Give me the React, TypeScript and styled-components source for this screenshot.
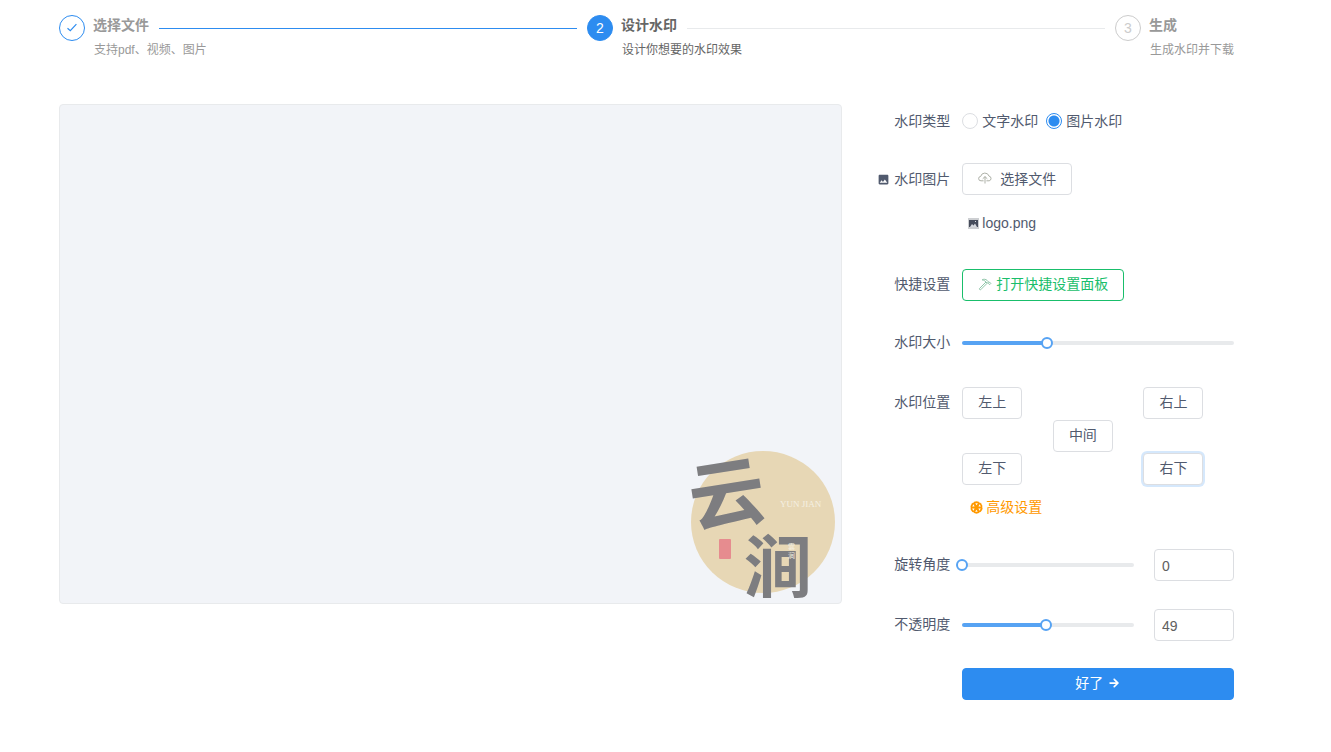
import React, { useState } from "react";
import styled, { createGlobalStyle } from "styled-components";
import { IoMdArrowRoundForward, IoMdImage } from "react-icons/io";

const GlobalStyle = createGlobalStyle`
  *, *::before, *::after { box-sizing: border-box; }
  body {
    margin: 0;
    background: #fff;
    color: #515a6e;
    font-family: "Liberation Sans", "Noto Sans CJK SC", sans-serif;
    font-size: 14px;
    line-height: 20px;
  }
  button, input { font: inherit; }
`;

const Page = styled.main`
  padding: 15px 97px 52px 59px;
`;

/* ---------- steps ---------- */

type StepState = "done" | "active" | "wait";

const Steps = styled.ol`
  display: flex;
  margin: 0 0 45px;
  padding: 0;
  list-style: none;
`;

const StepItem = styled.li`
  display: flex;
  gap: 8px;
  flex: 1;

  &:last-child {
    flex: none;
  }
`;

const StepMark = styled.span<{ $state: StepState }>`
  display: flex;
  align-items: center;
  justify-content: center;
  width: 26px;
  height: 26px;
  border: 1px solid ${(p) => (p.$state === "wait" ? "#ccc" : "#2d8cf0")};
  border-radius: 50%;
  background: ${(p) => (p.$state === "active" ? "#2d8cf0" : "#fff")};
  color: ${(p) =>
    p.$state === "active" ? "#fff" : p.$state === "wait" ? "#ccc" : "#2d8cf0"};
`;

const StepBody = styled.div<{ $state: StepState }>`
  flex: 1;
  color: ${(p) => (p.$state === "active" ? "#666" : "#999")};
`;

const StepHead = styled.div`
  display: flex;
  align-items: flex-start;
  gap: 10px;
  height: 26px;
`;

const StepTitle = styled.strong`
  font-weight: 700;
`;

const StepLine = styled.span<{ $done: boolean }>`
  flex: 1;
  align-self: center;
  height: 1px;
  margin-right: 10px;
  background: ${(p) => (p.$done ? "#2d8cf0" : "#e8eaec")};
`;

const StepText = styled.div`
  padding-left: 1px;
  font-size: 12px;
  line-height: 18px;
`;

/* ---------- workspace ---------- */

const Workspace = styled.div`
  display: grid;
  grid-template-columns: 2fr 1fr;
  align-items: start;
`;

const Preview = styled.section`
  display: flex;
  align-items: flex-end;
  justify-content: flex-end;
  min-height: 500px;
  padding: 3px 5px;
  border: 1px solid #e8eaec;
  border-radius: 4px;
  background: #f2f4f8;
`;

const Form = styled.form`
  display: flex;
  flex-direction: column;
  gap: 24px;
`;

const Row = styled.div<{ $tall?: boolean }>`
  display: grid;
  grid-template-columns: 108px minmax(0, 1fr);
  column-gap: 12px;
  align-items: start;
  min-height: ${(p) => (p.$tall ? 36 : 34)}px;
`;

const RowLabel = styled.label`
  display: flex;
  align-items: center;
  justify-content: flex-end;
  gap: 4px;
  line-height: 34px;
`;

const RadioGroup = styled.div`
  display: flex;
  gap: 8px;
  line-height: 34px;
`;

const RadioLabel = styled.label`
  display: flex;
  align-items: center;
  gap: 4px;
`;

const Radio = styled.input`
  appearance: none;
  width: 16px;
  height: 16px;
  margin: 0;
  border: 1px solid #dcdee2;
  border-radius: 50%;
  background: #fff;

  &:checked {
    border-color: #2d8cf0;
    background: radial-gradient(circle, #2d8cf0 5px, #fff 6px);
  }
`;

const Button = styled.button<{ $tone?: "success" | "primary"; $focus?: boolean }>`
  display: inline-flex;
  align-items: center;
  justify-content: center;
  gap: 4px;
  height: 32px;
  padding: 0 15px 2px;
  border: 1px solid
    ${(p) =>
      p.$tone === "success" ? "#19be6b" : p.$tone === "primary" ? "#2d8cf0" : "#dcdee2"};
  border-radius: 4px;
  background: ${(p) => (p.$tone === "primary" ? "#2d8cf0" : "#fff")};
  color: ${(p) =>
    p.$tone === "success" ? "#19be6b" : p.$tone === "primary" ? "#fff" : "#515a6e"};
  box-shadow: ${(p) => (p.$focus ? "0 0 0 2px rgba(45, 140, 240, 0.2)" : "none")};
  cursor: pointer;
`;

const UploadButton = styled(Button)`
  gap: 8px;
  padding-bottom: 0;
`;

const ButtonField = styled.div`
  display: flex;
  flex-direction: column;
  align-items: flex-start;
  padding-top: 1px;
`;

const QuickField = styled(ButtonField)`
  padding-top: 2px;
`;

const SubmitField = styled(ButtonField)`
  align-items: stretch;
  grid-column: 2;
`;

const FileList = styled.ul`
  margin: 16px 0 8px;
  padding: 0;
  list-style: none;
`;

const FileItem = styled.li`
  display: flex;
  align-items: center;
  gap: 3px;
  padding: 2px 6px;
`;

const SliderField = styled.div<{ $withInput?: boolean }>`
  display: grid;
  grid-template-columns: ${(p) => (p.$withInput ? "1fr 80px" : "1fr")};
  column-gap: 20px;
  align-items: center;
  height: 36px;
`;

const SliderTrack = styled.div`
  display: flex;
  align-items: center;
  height: 4px;
  border-radius: 2px;
`;

const Range = styled.input`
  appearance: none;
  flex: 1;
  height: 12px;
  margin: 0 -6px;
  background: transparent;

  &::-webkit-slider-thumb {
    appearance: none;
    width: 12px;
    height: 12px;
    border: 2px solid #57a3f3;
    border-radius: 50%;
    background: #fff;
  }
`;

const NumberBox = styled.input`
  width: 100%;
  height: 32px;
  padding: 2px 7px 0;
  border: 1px solid #dcdee2;
  border-radius: 4px;
  background: #fff;
  color: #606060;
`;

const PositionGrid = styled.div`
  display: grid;
  grid-template-columns: repeat(3, 1fr);
  justify-items: start;
  row-gap: 1px;
  padding-top: 2px;
`;

const PositionSlot = styled.div<{ $col: number; $row: number }>`
  grid-column: ${(p) => p.$col};
  grid-row: ${(p) => p.$row};
`;

const Advanced = styled.a`
  display: flex;
  align-items: center;
  gap: 3px;
  grid-column: 1 / -1;
  padding: 11px 8px 6px;
  color: #ff9900;
  text-decoration: none;
`;

/* ---------- drawings ---------- */

const CheckIcon = () => (
  <svg width="14" height="14" viewBox="0 0 14 14" fill="none" stroke="currentColor" strokeWidth="1.2" aria-hidden="true">
    <path d="M2.5 7.2 5.3 9.6 11.4 3.2" />
  </svg>
);

const CloudIcon = () => (
  <svg width="14" height="14" viewBox="0 0 14 14" fill="none" stroke="#a5a89e" strokeWidth="0.9" aria-hidden="true">
    <path d="M5.6 8.8H3a2.2 2.2 0 0 1-.3-4.4 4.3 4.3 0 0 1 8.3-.3 2.4 2.4 0 0 1 .2 4.7H8.4" />
    <path d="M7 11.5V4.6M4.7 6.8 7 4.6l2.3 2.2" />
  </svg>
);

const HammerIcon = () => (
  <svg width="14" height="14" viewBox="0 0 14 14" fill="none" stroke="#84bfa0" strokeWidth="0.9" aria-hidden="true">
    <path d="M1.4 11.6 8 5l1.2 1.2-6.6 6.6c-.5.4-1.6-.7-1.2-1.2Z" />
    <path d="M8 5 7 4.1C6 3.2 5 3 4.1 2.9c1.7-1 3.6-.8 5 .5l2 2 .8-.1 1 1-1.3 1.4-1-1 .1-.7-.8-.7L9.2 6.2" />
  </svg>
);

const ThumbIcon = () => (
  <svg width="11" height="11" viewBox="0 0 11 11" aria-hidden="true">
    <path fill="#cdcfd2" d="M0 0h11v11H0z" />
    <path fill="#464c5b" d="M1 2h9v7H1z" />
    <path fill="#d5d8de" d="M2 9l2-3 1.5 1.6L7 5.5 9 9zM7 3h1v1H7z" />
  </svg>
);

const spokes = [0, 60, 120, 180, 240, 300];

const ApertureIcon = () => (
  <svg width="13" height="13" viewBox="-7 -7 14 14" aria-hidden="true">
    <circle r="6.6" fill="currentColor" />
    {spokes.map((deg) => (
      <g key={deg} transform={`rotate(${deg})`} fill="#fff">
        <path d="M-1.3-4.6H1.5L0-2.4Z" />
        <path d="M2.4-6.6 3.8-6 2.8-5.2Z" />
      </g>
    ))}
  </svg>
);

const LogoSvg = styled.svg`
  overflow: visible;
`;

const Logo = () => (
  <LogoSvg width="146" height="153" viewBox="0 0 146 153" role="img" aria-label="云涧 YUN JIAN">
    <ellipse cx="73" cy="75" rx="72" ry="71" fill="#e7d7b5" />
    <rect x="29" y="92" width="12" height="20" rx="1" fill="#e68c8f" />
    <g fill="#7d7d80" fontFamily="'Noto Sans CJK SC', sans-serif" fontWeight="700">
      <text x="-2" y="75" fontSize="76" transform="rotate(-9 36 42)">云</text>
      <text x="54" y="145" fontSize="68">涧</text>
    </g>
    <g fill="#f5f0e2">
      <text x="90" y="60" fontFamily="'Liberation Serif', serif" fontSize="9">YUN JIAN</text>
      <text x="98" y="102" fontSize="7">雲</text>
      <text x="98" y="111" fontSize="7">涧</text>
    </g>
  </LogoSvg>
);

/* ---------- app ---------- */

const steps: { title: string; text: string; state: StepState }[] = [
  { title: "选择文件", text: "支持pdf、视频、图片", state: "done" },
  { title: "设计水印", text: "设计你想要的水印效果", state: "active" },
  { title: "生成", text: "生成水印并下载", state: "wait" },
];

const positions = [
  { name: "左上", col: 1, row: 1 },
  { name: "右上", col: 3, row: 1 },
  { name: "中间", col: 2, row: 2 },
  { name: "左下", col: 1, row: 3 },
  { name: "右下", col: 3, row: 3 },
];

type SliderProps = {
  id: string;
  value: number;
  max: number;
  onChange: (value: number) => void;
};

function Slider({ id, value, max, onChange }: SliderProps) {
  const pct = (value / max) * 100;
  return (
    <SliderTrack
      style={{ background: `linear-gradient(90deg, #57a3f3 ${pct}%, #e8eaec ${pct}%)` }}
    >
      <Range
        id={id}
        type="range"
        min={0}
        max={max}
        value={value}
        onChange={(e) => onChange(Number(e.target.value))}
      />
    </SliderTrack>
  );
}

export default function App() {
  const [kind, setKind] = useState("image");
  const [size, setSize] = useState(31);
  const [angle, setAngle] = useState(0);
  const [opacity, setOpacity] = useState(49);
  const [position, setPosition] = useState("右下");

  return (
    <Page>
      <GlobalStyle />
      <Steps>
        {steps.map((step, i) => (
          <StepItem key={step.title}>
            <StepMark $state={step.state}>
              {step.state === "done" ? <CheckIcon /> : i + 1}
            </StepMark>
            <StepBody $state={step.state}>
              <StepHead>
                <StepTitle>{step.title}</StepTitle>
                {i < steps.length - 1 && <StepLine $done={step.state === "done"} />}
              </StepHead>
              <StepText>{step.text}</StepText>
            </StepBody>
          </StepItem>
        ))}
      </Steps>

      <Workspace>
        <Preview>
          <Logo />
        </Preview>

        <Form onSubmit={(e) => e.preventDefault()}>
          <Row>
            <RowLabel as="span" id="kind-label">水印类型</RowLabel>
            <RadioGroup role="radiogroup" aria-labelledby="kind-label">
              <RadioLabel>
                <Radio type="radio" name="kind" checked={kind === "text"} onChange={() => setKind("text")} />
                文字水印
              </RadioLabel>
              <RadioLabel>
                <Radio type="radio" name="kind" checked={kind === "image"} onChange={() => setKind("image")} />
                图片水印
              </RadioLabel>
            </RadioGroup>
          </Row>

          <Row>
            <RowLabel htmlFor="pick">
              <IoMdImage size={13} />
              水印图片
            </RowLabel>
            <ButtonField>
              <UploadButton id="pick" type="button">
                <CloudIcon />
                选择文件
              </UploadButton>
              <FileList>
                <FileItem>
                  <ThumbIcon />
                  logo.png
                </FileItem>
              </FileList>
            </ButtonField>
          </Row>

          <Row>
            <RowLabel htmlFor="quick">快捷设置</RowLabel>
            <QuickField>
              <Button id="quick" type="button" $tone="success">
                <HammerIcon />
                打开快捷设置面板
              </Button>
            </QuickField>
          </Row>

          <Row $tall>
            <RowLabel htmlFor="size">水印大小</RowLabel>
            <SliderField>
              <Slider id="size" value={size} max={100} onChange={setSize} />
            </SliderField>
          </Row>

          <Row>
            <RowLabel as="span" id="position-label">水印位置</RowLabel>
            <PositionGrid role="group" aria-labelledby="position-label">
              {positions.map((p) => (
                <PositionSlot key={p.name} $col={p.col} $row={p.row}>
                  <Button type="button" $focus={position === p.name} onClick={() => setPosition(p.name)}>
                    {p.name}
                  </Button>
                </PositionSlot>
              ))}
              <Advanced href="#advanced">
                <ApertureIcon />
                高级设置
              </Advanced>
            </PositionGrid>
          </Row>

          <Row $tall>
            <RowLabel htmlFor="angle">旋转角度</RowLabel>
            <SliderField $withInput>
              <Slider id="angle" value={angle} max={360} onChange={setAngle} />
              <NumberBox
                aria-label="旋转角度"
                value={angle}
                onChange={(e) => setAngle(Number(e.target.value) || 0)}
              />
            </SliderField>
          </Row>

          <Row $tall>
            <RowLabel htmlFor="opacity">不透明度</RowLabel>
            <SliderField $withInput>
              <Slider id="opacity" value={opacity} max={100} onChange={setOpacity} />
              <NumberBox
                aria-label="不透明度"
                value={opacity}
                onChange={(e) => setOpacity(Number(e.target.value) || 0)}
              />
            </SliderField>
          </Row>

          <Row>
            <SubmitField>
              <Button type="submit" $tone="primary">
                好了
                <IoMdArrowRoundForward size={14} />
              </Button>
            </SubmitField>
          </Row>
        </Form>
      </Workspace>
    </Page>
  );
}
